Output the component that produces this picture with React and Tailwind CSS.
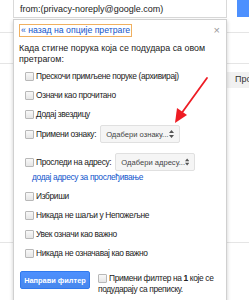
const ROWS_TOP = [
  'Прескочи примљене поруке (архивирај)',
  'Означи као прочитано',
  'Додај звездицу',
]

const ROWS_BOTTOM = [
  'Избриши',
  'Никада не шаљи у Непожељне',
  'Увек означи као важно',
  'Никада не означавај као важно',
]

function Box() {
  return (
    <span className="inline-block h-[9px] w-[9px] shrink-0 rounded-[1px] border border-[#b8b8b8] bg-gradient-to-b from-[#f8f8f8] to-[#e6e6e6]" />
  )
}

function Row({ children }) {
  return (
    <div className="flex h-[12px] items-center gap-[2px] whitespace-nowrap pl-[11px]">
      <Box />
      <span>{children}</span>
    </div>
  )
}

function Picker({ label }) {
  return (
    <span className="ml-[2px] flex h-[18px] w-[80px] items-center justify-between rounded-[2px] border border-[#e0e0e0] bg-[#f5f5f5] px-[5px] text-[7.6px] tracking-normal text-[#444]">
      {label}
      <svg width="5" height="8" viewBox="0 0 5 8">
        <path d="M0 3 L2.5 0 L5 3 Z M0 5 L2.5 8 L5 5 Z" fill="#555" />
      </svg>
    </span>
  )
}

export default function App() {
  return (
    <div className="relative h-[300px] w-[249px] overflow-hidden bg-white font-['Liberation_Sans',Arial,sans-serif] text-[#222]">
      {/* page behind the dropdown */}
      <div className="flex h-[18px] items-start">
        <div className="ml-[13px] flex h-[18px] w-[214px] items-center border border-t-0 border-[#d9d9d9] pl-[6px] pt-[3px] text-[9px] text-[#222]">
          from:(privacy-noreply@google.com)
        </div>
        <div className="ml-[10px] h-[17px] flex-1 bg-[#4d90fe]" />
      </div>
      <div className="mt-[14px] h-px w-full bg-[#e5e5e5]" />
      <div className="mt-[30px] h-px w-full bg-[#e5e5e5]" />
      <div className="mt-[8px] flex h-[16px] items-center justify-end">
        <span className="flex h-full w-[22px] items-center bg-[#f1f1f1] pl-[8px] text-[9px] text-[#333]">
          Про
        </span>
      </div>
      <div className="mt-[154px] h-px w-full bg-[#e5e5e5]" />

      {/* filter dropdown */}
      <div className="absolute left-[13px] top-[19px] h-[300px] w-[214px] border border-[#d0d0d0] bg-white text-[8.4px] leading-[11px] tracking-[-0.35px] shadow-[0_2px_4px_rgba(0,0,0,0.2)]">
        <div className="flex items-start justify-between pl-[5px] pr-[6px] pt-[4px] tracking-normal">
          <span className="border border-[#f0b060] px-[1px] text-[8.7px] text-[#1155cc]">« назад на опције претраге</span>
          <span className="mt-[1px] text-[11px] leading-[10px] text-[#999]">×</span>
        </div>
        <p className="mt-[6px] pl-[5px] pr-[8px] text-[8.9px] tracking-normal">
          Када стигне порука која се подудара са овом претрагом:
        </p>
        <div className="mt-[5px] flex flex-col gap-[7px]">
          {ROWS_TOP.map((t) => (
            <Row key={t}>{t}</Row>
          ))}
        </div>
        <div className="mt-[5px] flex flex-col gap-[10px]">
          <div className="flex items-center gap-[2px] whitespace-nowrap pl-[11px]">
            <Box />
            <span>Примени ознаку:</span>
            <Picker label="Одабери ознаку..." />
          </div>
          <div className="flex items-center gap-[2px] whitespace-nowrap pl-[11px]">
            <Box />
            <span>Проследи на адресу:</span>
            <Picker label="Одабери адресу..." />
          </div>
        </div>
        <div className="mt-[1px] pl-[18px] text-[#1155cc]">додај адресу за прослеђивање</div>
        <div className="mt-[7px] flex flex-col gap-[7px]">
          {ROWS_BOTTOM.map((t) => (
            <Row key={t}>{t}</Row>
          ))}
        </div>
        <div className="mt-[12px] flex items-start pl-[6px]">
          <button className="h-[18px] w-[70px] rounded-[2px] border border-[#3079ed] bg-gradient-to-b from-[#4d90fe] to-[#4787ed] text-[7.4px] font-bold tracking-normal text-white">
            Направи филтер
          </button>
          <div className="ml-[8px] mt-[2px] leading-[11px]">
            <div className="flex items-center gap-[2px] whitespace-nowrap">
              <Box />
              <span>
                Примени филтер на <b>1</b> које се
              </span>
            </div>
            <div>подударају са преписку.</div>
          </div>
        </div>
      </div>

      {/* red annotation arrow */}
      <svg className="absolute left-0 top-0" width="249" height="300" viewBox="0 0 249 300">
        <line x1="207" y1="78" x2="181" y2="114" stroke="#ee1c24" strokeWidth="1.8" strokeLinecap="round" />
        <path d="M175 123 L177 108 L187 115 Z" fill="#ee1c24" />
      </svg>
    </div>
  )
}
